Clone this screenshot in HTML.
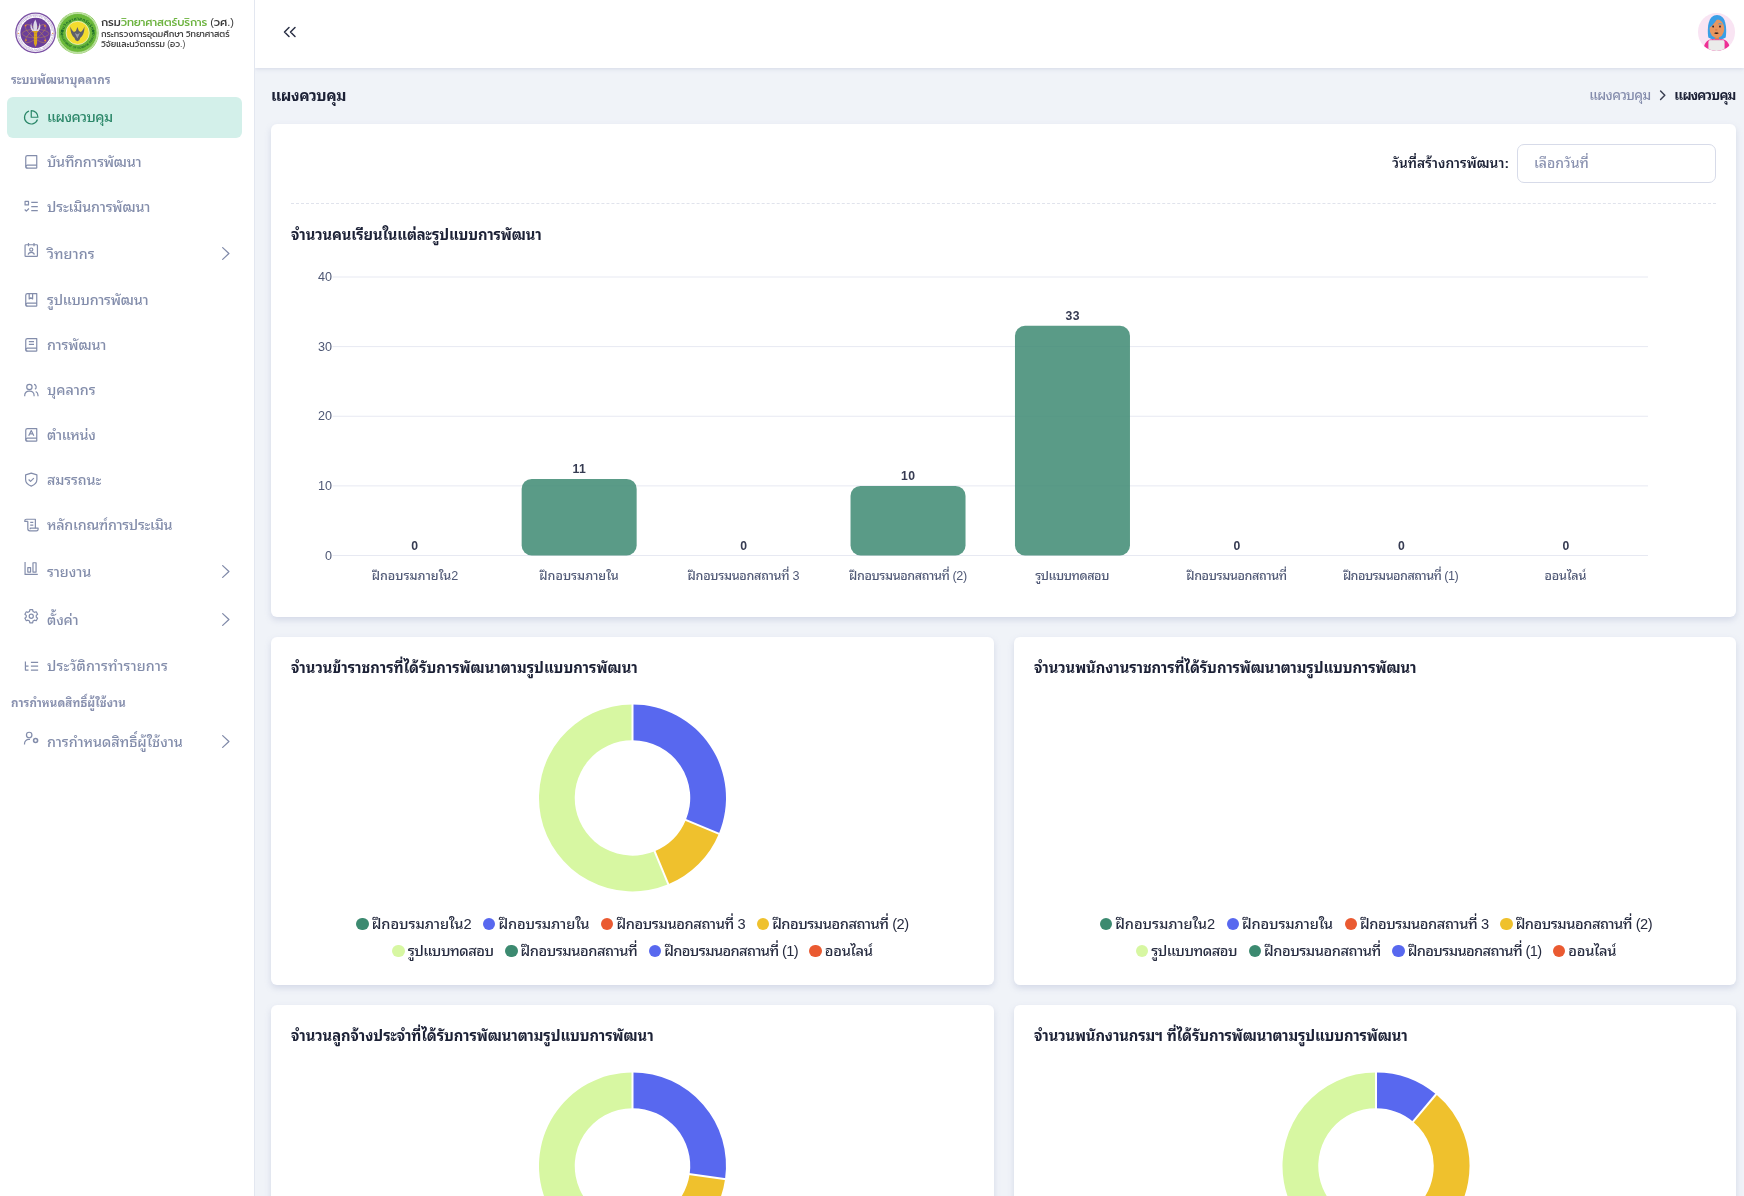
<!DOCTYPE html>
<html lang="th"><head><meta charset="utf-8"><title>แผงควบคุม</title>
<style>
*{box-sizing:border-box;margin:0;padding:0}
html,body{width:1744px;height:1196px;overflow:hidden;background:#f0f3f8;font-family:"Liberation Sans","Noto Sans Thai Looped","Loma","Noto Sans Thai",sans-serif;color:#1f2437}
#side{position:absolute;left:0;top:0;width:255px;height:1196px;background:#fff;border-right:1px solid #e3e7f0;z-index:3}
#top{position:absolute;left:255px;top:0;width:1489px;height:68px;background:#fff;box-shadow:0 1px 4px rgba(160,170,200,.35)}
.logo{position:absolute;left:0;top:0;width:254px;height:66px}
.lt1{position:absolute;left:101px;top:15px;font-family:"Liberation Sans","Prompt","Kanit","Noto Sans Thai",sans-serif;font-size:11.1px;font-weight:500;line-height:14px;color:#3a3a3a;white-space:nowrap}
.lt1 b{font-weight:500;color:#6cb33f}
.lt2{position:absolute;left:101px;top:29px;font-family:"Liberation Sans","Prompt","Kanit","Noto Sans Thai",sans-serif;font-size:8.5px;font-weight:500;line-height:10px;color:#444;white-space:nowrap}
.sec{position:absolute;left:11px;font-size:11.500px;font-weight:700;color:#8a92b0;line-height:14px;white-space:nowrap}
.mi{position:absolute;left:7px;width:235px;height:41px;border-radius:6px;font-weight:500;color:#838dab;font-size:14.3px;line-height:41px;white-space:nowrap}
.mi.act{background:#d3f0ea;color:#2b8769}
.mi.act .mt{top:0}
.mi .ico{position:absolute;left:15.800px;top:12.700px;width:16.500px;height:16.500px}
.mi.up .ico{top:9.200px}
.mi .mt{position:absolute;left:40px;top:1px}
.mi .chev{position:absolute;left:214px;top:13px;width:10px;height:15px;color:#808aa9}
.tog{position:absolute;left:283px;top:25px;width:14px;height:14px;color:#2a2f45}
.ava{position:absolute;left:1697.600px;top:13px;width:37.800px;height:38.200px;border-radius:50%;background:#f9e4f3;overflow:hidden}
.ptitle{position:absolute;left:271px;top:85px;font-size:15.500px;font-weight:700;color:#1c2136;line-height:22px}
.crumb{position:absolute;top:84.500px;font-size:13.600px;line-height:22px;color:#848cac;white-space:nowrap}
.cchev{position:absolute;left:1659px;top:90.200px;width:7.400px;height:10.600px;color:#3a3f52}
.card{position:absolute;background:#fff;border-radius:6px;box-shadow:0 3px 6px rgba(140,152,190,.28)}
.ctitle{position:absolute;left:20px;top:20px;font-size:14.750px;font-weight:700;color:#1c2136;line-height:22px;white-space:nowrap}
.flabel{position:absolute;right:227px;top:29px;font-size:13.700px;font-weight:600;color:#1c2136;line-height:22px;white-space:nowrap}
.finput{position:absolute;left:1246px;top:20px;width:199px;height:39px;border:1px solid #d7dbe9;border-radius:7px;font-weight:500;font-size:14px;line-height:37px;padding-left:16px;color:#8a92b0}
.dash{position:absolute;left:20px;top:79px;width:1425px;height:0;border-top:1px dashed #e0e3ec}
.bsvg{position:absolute;left:0;top:0}
.yl{font-family:"Liberation Sans","Noto Sans Thai Looped","Loma","Noto Sans Thai",sans-serif;font-size:12.600px;fill:#4f5875}
.xl{font-family:"Liberation Sans","Noto Sans Thai Looped","Loma","Noto Sans Thai",sans-serif;font-size:12.600px;font-weight:500;fill:#505976}
.dl{font-family:"Liberation Sans","Noto Sans Thai Looped","Loma","Noto Sans Thai",sans-serif;font-size:12.200px;font-weight:700;fill:#363b52;letter-spacing:.5px}
.dsvg{position:absolute;left:0;top:66px}
.legend{position:absolute;left:0;right:0;top:273.800px;text-align:center;font-size:14.650px;font-weight:500;color:#272c40;line-height:27px}
.lrow{height:27px;white-space:nowrap}
.li{display:inline-block;margin:0 5.800px}
.li i{display:inline-block;width:12.400px;height:12.400px;border-radius:50%;margin-right:3px;vertical-align:-1.500px}
#app{position:absolute;left:0;top:0;width:1744px;height:1196px;overflow:hidden;will-change:transform}
</style></head><body><div id="app">
<div id="side">
 <div class="logo">
  <svg width="100" height="66" viewBox="0 0 100 66" style="position:absolute;left:0;top:0">
   <defs>
    <path id="pa" d="M19.300 32.850a16.250 16.250 0 0 1 32.500 0"/>
    <path id="pb" d="M18.200 32.850a17.350 17.350 0 0 0 34.700 0"/>
    <path id="ga" d="M63.300 34.500a14.400 14.400 0 0 1 28.800 0"/>
    <path id="gb" d="M60.500 31.500a17.200 17.200 0 0 0 34.400 0"/>
   </defs>
   <circle cx="35.550" cy="32.850" r="19.700" fill="#fff" stroke="#7c52a5" stroke-width="1.300"/>
   <circle cx="35.550" cy="32.850" r="18.100" fill="none" stroke="#a78fc6" stroke-width=".5"/>
   <text font-family="'Liberation Sans','Noto Sans Thai',sans-serif" font-size="2.100" fill="#8a6bb0" letter-spacing=".05"><textPath href="#pa" startOffset="50%" text-anchor="middle">กระทรวงการอุดมศึกษา วิทยาศาสตร์ วิจัยและนวัตกรรม</textPath></text>
   <text font-family="'Liberation Sans',sans-serif" font-size="1.900" fill="#8a6bb0"><textPath href="#pb" startOffset="50%" text-anchor="middle">MINISTRY OF HIGHER EDUCATION, SCIENCE, RESEARCH AND INNOVATION</textPath></text>
   <circle cx="18.300" cy="33.300" r=".650" fill="#f0922e"/><circle cx="52.700" cy="33.300" r=".650" fill="#f0922e"/>
   <circle cx="35.550" cy="32.850" r="15.150" fill="#6b3e99"/>
   <g fill="none" stroke="#cfa040" stroke-width=".45" opacity=".85">
    <ellipse cx="35.550" cy="33.600" rx="13.300" ry="4.300"/>
    <ellipse cx="35.550" cy="33.600" rx="13.300" ry="4.300" transform="rotate(40 35.550 33.600)"/>
    <ellipse cx="35.550" cy="33.600" rx="13.300" ry="4.300" transform="rotate(-40 35.550 33.600)"/>
   </g>
   <g fill="#f08c28"><circle cx="25.600" cy="25.600" r=".900"/><circle cx="44.900" cy="25.900" r=".900"/><circle cx="26" cy="40.100" r=".900"/><circle cx="45.100" cy="40.500" r=".900"/></g>
   <path d="M35.300 19.500c2 3.300 2.400 7.800 1.300 11.500h-2.700c-1.200-3.700-.8-8.200 1.400-11.500zM31.300 22.800c-1.600 3.200-1 6.500 1.300 8.400l1.600-.5c-2-2.200-2.900-4.900-2.900-7.900zM39.500 22.800c1.600 3.200 1 6.500-1.300 8.400l-1.600-.5c2-2.200 2.900-4.900 2.900-7.900z" fill="#ddd8e6"/>
   <path d="M32.700 30.900h5.400v1.300h-1v11.200l-1.600 3.600-1.600-3.600V32.200h-1.200z" fill="#d9a31f"/>
   <path d="M34.500 33.500h2M34.500 36.500h2M34.500 39.500h2" stroke="#b98512" stroke-width=".4"/>
   <circle cx="77.700" cy="32.900" r="20.900" fill="#79c142"/>
   <circle cx="77.700" cy="32.900" r="20.100" fill="none" stroke="#fff" stroke-width=".6"/>
   <circle cx="77.700" cy="32.900" r="19.100" fill="none" stroke="#fff" stroke-width=".55"/>
   <circle cx="77.700" cy="32.900" r="15.300" fill="none" stroke="#6bb93a" stroke-width="7"/>
   <text font-family="'Liberation Sans','Noto Sans Thai',sans-serif" font-size="4.300" font-weight="700" fill="#1d6a2b" letter-spacing=".25"><textPath href="#ga" startOffset="50%" text-anchor="middle">กรมวิทยาศาสตร์บริการ</textPath></text>
   <text font-family="'Liberation Sans',sans-serif" font-size="2.900" font-weight="700" fill="#1d6a2b" letter-spacing=".05"><textPath href="#gb" startOffset="50%" text-anchor="middle">DEPARTMENT OF SCIENCE SERVICE</textPath></text>
   <circle cx="62.100" cy="30.800" r="1.300" fill="#1d6a2b"/><circle cx="93.200" cy="30.800" r="1.300" fill="#1d6a2b"/>
   <circle cx="77.700" cy="32.900" r="11.600" fill="#f3dc2e" stroke="#f4f8e8" stroke-width=".7"/>
   <path d="M70.300 26.500c0 3.200.5 5.600 1.300 7.400.7 1.600 1.700 2.900 2.800 3.900l1.200 2.400 1.800 1 1.800-1 1.200-2.400c1.100-1 2.100-2.300 2.800-3.900.8-1.800 1.300-4.200 1.300-7.400-.9 2.500-2 4.300-3.700 5.400l-1.900-.9-1.500-3.900-1.500 3.900-1.900.9c-1.700-1.100-2.800-2.900-3.700-5.400z" fill="#5e6068"/>
   <path d="M74.800 33l2.600 5.500 2.600-5.500-2.600 1.200z" fill="#9a9ca3"/>
  </svg>
  <div class="lt1" style="letter-spacing:-0.124px">กรม<b>วิทยาศาสตร์บริการ</b> (วศ.)</div>
  <div class="lt2"><span style="letter-spacing:-0.049px">กระทรวงการอุดมศึกษา วิทยาศาสตร์</span><br><span style="letter-spacing:-0.029px">วิจัยและนวัตกรรม (อว.)</span></div>
 </div>
 <div class="sec" style="top:73px;letter-spacing:0.06px">ระบบพัฒนาบุคลากร</div>
 <div class="mi act" style="top:96.5px"><svg class="ico" viewBox="0 0 24 24" fill="none" stroke="currentColor" stroke-width="1.750" stroke-linecap="butt" stroke-linejoin="round"><path d="M8.800 2.900A9.700 9.700 0 1 0 21.100 15.200"/><path d="M12 2.300v9.700h9.700A9.700 9.700 0 0 0 12 2.300z"/></svg><span class="mt" style="letter-spacing:-0.516px">แผงควบคุม</span></div>
<div class="mi" style="top:140.5px"><svg class="ico" viewBox="0 0 24 24" fill="none" stroke="currentColor" stroke-width="1.750" stroke-linecap="butt" stroke-linejoin="round"><path d="M20 17.600V3.800H6.500A2.500 2.500 0 0 0 4 6.300v13.400A2.400 2.400 0 0 0 6.400 22.100H20"/><path d="M20 17.600H6.400a2.250 2.250 0 0 0 0 4.500M20 17.600v4.500"/></svg><span class="mt" style="letter-spacing:-0.253px">บันทึกการพัฒนา</span></div>
<div class="mi" style="top:185.5px"><svg class="ico" viewBox="0 0 24 24" fill="none" stroke="currentColor" stroke-width="1.750" stroke-linecap="butt" stroke-linejoin="round"><rect x="3" y="5" width="5" height="5"/><path d="M2.500 16.800l2.300 2.300 3.900-3.900"/><path d="M12 6.500h9.500M12 12.500h9.500M12 18.500h9.500"/></svg><span class="mt" style="letter-spacing:-0.155px">ประเมินการพัฒนา</span></div>
<div class="mi up" style="top:232.5px"><svg class="ico" viewBox="0 0 24 24" fill="none" stroke="currentColor" stroke-width="1.750" stroke-linecap="butt" stroke-linejoin="round"><rect x="3" y="4" width="18" height="17" rx="1"/><path d="M8 1.500v4.500M16 1.500v4.500"/><circle cx="12" cy="11" r="2.300"/><path d="M7.500 18.500c.5-2.500 2.300-3.500 4.500-3.500s4 1 4.500 3.500"/></svg><span class="mt" style="letter-spacing:0.086px">วิทยากร</span><svg class="chev" viewBox="0 0 12 18" fill="none" stroke="currentColor" stroke-width="1.500" stroke-linecap="round" stroke-linejoin="round"><path d="M2 2l7.500 7L2 16"/></svg></div>
<div class="mi" style="top:278.5px"><svg class="ico" viewBox="0 0 24 24" fill="none" stroke="currentColor" stroke-width="1.750" stroke-linecap="butt" stroke-linejoin="round"><path d="M20 17.600V3.800H6.500A2.500 2.500 0 0 0 4 6.300v13.400A2.400 2.400 0 0 0 6.400 22.100H20"/><path d="M20 17.600H6.400a2.250 2.250 0 0 0 0 4.500M20 17.600v4.500"/><path d="M9 3.800v7.700l2.500-1.800 2.500 1.800V3.800"/></svg><span class="mt" style="letter-spacing:-0.214px">รูปแบบการพัฒนา</span></div>
<div class="mi" style="top:323.5px"><svg class="ico" viewBox="0 0 24 24" fill="none" stroke="currentColor" stroke-width="1.750" stroke-linecap="butt" stroke-linejoin="round"><path d="M20 17.600V3.800H6.500A2.500 2.500 0 0 0 4 6.300v13.400A2.400 2.400 0 0 0 6.400 22.100H20"/><path d="M20 17.600H6.400a2.250 2.250 0 0 0 0 4.500M20 17.600v4.500"/><path d="M8.500 8.200h7.500M8.500 12.200h7.500"/></svg><span class="mt" style="letter-spacing:-0.138px">การพัฒนา</span></div>
<div class="mi" style="top:368.5px"><svg class="ico" viewBox="0 0 24 24" fill="none" stroke="currentColor" stroke-width="1.750" stroke-linecap="butt" stroke-linejoin="round"><circle cx="9.300" cy="8.700" r="3.900"/><path d="M2.500 22v-1.200A6.200 6.200 0 0 1 8.700 14.600h1.200A6.200 6.200 0 0 1 16.100 20.800V22"/><path d="M16 4.900a3.900 3.900 0 0 1 1.300 7.200M21.800 22v-1.200a6.200 6.200 0 0 0-3.300-5.500"/></svg><span class="mt" style="letter-spacing:0.013px">บุคลากร</span></div>
<div class="mi" style="top:413.5px"><svg class="ico" viewBox="0 0 24 24" fill="none" stroke="currentColor" stroke-width="1.750" stroke-linecap="butt" stroke-linejoin="round"><path d="M20 17.600V3.800H6.500A2.500 2.500 0 0 0 4 6.300v13.400A2.400 2.400 0 0 0 6.400 22.100H20"/><path d="M20 17.600H6.400a2.250 2.250 0 0 0 0 4.500M20 17.600v4.500"/><path d="M8.300 14.200L12 6.700l3.700 7.500M9.700 11.500h4.600"/></svg><span class="mt" style="letter-spacing:-0.289px">ตำแหน่ง</span></div>
<div class="mi" style="top:458.5px"><svg class="ico" viewBox="0 0 24 24" fill="none" stroke="currentColor" stroke-width="1.750" stroke-linecap="butt" stroke-linejoin="round"><path d="M12 3l8.200 2.700v6.800c0 4.700-3.400 7.800-8.200 9.500-4.800-1.700-8.200-4.800-8.200-9.500V5.700z"/><path d="M8.200 12.300l2.800 2.800 4.800-4.800"/></svg><span class="mt" style="letter-spacing:-0.114px">สมรรถนะ</span></div>
<div class="mi" style="top:503.5px"><svg class="ico" viewBox="0 0 24 24" fill="none" stroke="currentColor" stroke-width="1.750" stroke-linecap="butt" stroke-linejoin="round"><g transform="translate(0 1.200)"><path d="M7 6.500V17.500A3 3 0 0 0 10 20.500H19.500A2.500 2.500 0 0 0 22 18V16.500H10.500V18"/><path d="M18 16.500V3.500H5A2.500 2.500 0 0 0 2.500 6v.5H7"/><path d="M10.500 8h4.500M10.500 12h4.500"/></g></svg><span class="mt" style="letter-spacing:-0.252px">หลักเกณฑ์การประเมิน</span></div>
<div class="mi up" style="top:550.5px"><svg class="ico" viewBox="0 0 24 24" fill="none" stroke="currentColor" stroke-width="1.750" stroke-linecap="butt" stroke-linejoin="round"><path d="M3 3v18h18.500"/><rect x="7" y="11" width="4" height="6.500"/><rect x="14.500" y="4" width="4.500" height="13.500"/></svg><span class="mt" style="letter-spacing:-0.052px">รายงาน</span><svg class="chev" viewBox="0 0 12 18" fill="none" stroke="currentColor" stroke-width="1.500" stroke-linecap="round" stroke-linejoin="round"><path d="M2 2l7.500 7L2 16"/></svg></div>
<div class="mi up" style="top:598.5px"><svg class="ico" viewBox="0 0 24 24" fill="none" stroke="currentColor" stroke-width="1.750" stroke-linecap="butt" stroke-linejoin="round"><circle cx="12" cy="12" r="3"/><path d="M9.98 2.51L14.02 2.51L14.53 5.05L16.76 6.33L19.21 5.51L21.23 9.00L19.29 10.72L19.29 13.28L21.23 15.00L19.21 18.49L16.76 17.67L14.53 18.95L14.02 21.49L9.98 21.49L9.47 18.95L7.24 17.67L4.79 18.49L2.77 15.00L4.71 13.28L4.71 10.72L2.77 9.00L4.79 5.51L7.24 6.33L9.47 5.05Z"/></svg><span class="mt" style="letter-spacing:-0.137px">ตั้งค่า</span><svg class="chev" viewBox="0 0 12 18" fill="none" stroke="currentColor" stroke-width="1.500" stroke-linecap="round" stroke-linejoin="round"><path d="M2 2l7.500 7L2 16"/></svg></div>
<div class="mi" style="top:644.5px"><svg class="ico" viewBox="0 0 24 24" fill="none" stroke="currentColor" stroke-width="1.750" stroke-linecap="butt" stroke-linejoin="round"><path d="M3.500 6.500v12.500h4.500M3.500 13.300h4.500"/><path d="M11.500 7.800h10.500M11.500 13.400h10.500M11.500 19h10.500"/></svg><span class="mt" style="letter-spacing:0.127px">ประวัติการทำรายการ</span></div>
<div class="mi up" style="top:720.5px"><svg class="ico" viewBox="0 0 24 24" fill="none" stroke="currentColor" stroke-width="1.750" stroke-linecap="butt" stroke-linejoin="round"><circle cx="9" cy="7.300" r="4"/><path d="M2.200 21v-1A6.300 6.300 0 0 1 8.500 13.700h1.700"/><circle cx="18.300" cy="15.300" r="2.900" stroke-width="2.300"/></svg><span class="mt" style="letter-spacing:-0.014px">การกำหนดสิทธิ์ผู้ใช้งาน</span><svg class="chev" viewBox="0 0 12 18" fill="none" stroke="currentColor" stroke-width="1.500" stroke-linecap="round" stroke-linejoin="round"><path d="M2 2l7.500 7L2 16"/></svg></div>
 <div class="sec" style="top:696px;letter-spacing:0.101px">การกำหนดสิทธิ์ผู้ใช้งาน</div>
</div>
<div id="top"></div>
<svg class="tog" viewBox="0 0 14 14" fill="none" stroke="currentColor" stroke-width="1.500" stroke-linecap="round" stroke-linejoin="round"><path d="M6 2.500L1.500 7 6 11.500M12 2.500L7.500 7l4.500 4.500"/></svg>
<div class="ava"><svg width="38" height="38" viewBox="0 0 38 38">
 <path d="M10.300 24.500C8.800 14 10.500 2 19 2c8.500 0 10.200 12 8.700 22.500l-3 1.500H13.300z" fill="#3a9fe6"/>
 <path d="M16.800 23h4.200v4.500h-4.200z" fill="#d98350"/>
 <ellipse cx="18.900" cy="15.700" rx="7.300" ry="9.400" fill="#e9965f"/>
 <path d="M11.600 14.500c-.6-6 2-10.500 7.400-11.300 3.500-.4 6.500 1.500 7.800 5-2.500-2.400-6.300-2.700-8.300-1.300-2 3-4.500 6-6.900 7.600z" fill="#3a9fe6"/>
 <path d="M20.300 10.700c1.300-.7 3-.6 4 .2l-.2.700c-1.200-.5-2.500-.5-3.700-.1z" fill="#3a9fe6"/>
 <ellipse cx="15.100" cy="13.600" rx=".9" ry="1.100" fill="#2a1c2c"/><ellipse cx="22" cy="13.600" rx=".9" ry="1.100" fill="#2a1c2c"/>
 <ellipse cx="18.300" cy="16.900" rx="1.300" ry=".8" fill="#dc7f4f"/>
 <path d="M16.300 20c1.300-.6 3-.6 4.300 0-.3 1.200-4 1.200-4.300 0z" fill="#1f1416"/>
 <path d="M5.500 38c0-7 3-11.300 8.500-11.700h9.800C29.300 26.700 32 31 32 38z" fill="#ee2f95"/>
 <path d="M14 26c2 1.400 7.500 1.400 9.500 0v1.800h-9.500z" fill="#e0287f"/>
 <rect x="10.700" y="27.200" width="15.600" height="12" rx="1.500" fill="#ebebea" stroke="#dbf3e8" stroke-width=".5"/>
</svg></div>
<div class="ptitle" style="letter-spacing:-0.439px">แผงควบคุม</div>
<div class="crumb" style="left:1589.300px;font-weight:500;letter-spacing:-0.638px">แผงควบคุม</div><svg class="cchev" viewBox="0 0 7 10" fill="none" stroke="currentColor" stroke-width="1.400" stroke-linecap="round" stroke-linejoin="round"><path d="M1.500 1l4 4-4 4"/></svg><div class="crumb" style="left:1674.300px;color:#1c2136;font-weight:700;font-size:13.400px;letter-spacing:-0.816px">แผงควบคุม</div>

<div class="card" style="left:271px;top:124px;width:1465px;height:493px">
 <div class="flabel" style="letter-spacing:0.041px">วันที่สร้างการพัฒนา:</div>
 <div class="finput">เลือกวันที่</div>
 <div class="dash"></div>
 <div class="ctitle" style="top:100px;letter-spacing:-0.13px">จำนวนคนเรียนในแต่ละรูปแบบการพัฒนา</div>
 <svg class="bsvg" width="1465" height="492" viewBox="0 0 1465 492">
<line x1="61.5" x2="1377" y1="153.00" y2="153.00" stroke="#e7e9f2" stroke-width="1"/>
<text x="61.0" y="157.00" text-anchor="end" class="yl">40</text>
<line x1="61.5" x2="1377" y1="222.62" y2="222.62" stroke="#e7e9f2" stroke-width="1"/>
<text x="61.0" y="226.62" text-anchor="end" class="yl">30</text>
<line x1="61.5" x2="1377" y1="292.25" y2="292.25" stroke="#e7e9f2" stroke-width="1"/>
<text x="61.0" y="296.25" text-anchor="end" class="yl">20</text>
<line x1="61.5" x2="1377" y1="361.88" y2="361.88" stroke="#e7e9f2" stroke-width="1"/>
<text x="61.0" y="365.88" text-anchor="end" class="yl">10</text>
<line x1="61.5" x2="1377" y1="431.50" y2="431.50" stroke="#e7e9f2" stroke-width="1"/>
<text x="61.0" y="435.50" text-anchor="end" class="yl">0</text>
<text x="143.97" y="425.70" text-anchor="middle" class="dl">0</text>
<text x="143.90" y="455.80" text-anchor="middle" class="xl" style="letter-spacing:-0.007px">ฝึกอบรมภายใน2</text>
<rect x="250.66" y="354.91" width="115" height="76.59" rx="10" ry="10" fill="#3d8a72" fill-opacity=".85"/>
<text x="308.41" y="349.11" text-anchor="middle" class="dl">11</text>
<text x="307.99" y="455.80" text-anchor="middle" class="xl" style="letter-spacing:-0.024px">ฝึกอบรมภายใน</text>
<text x="472.84" y="425.70" text-anchor="middle" class="dl">0</text>
<text x="472.34" y="455.80" text-anchor="middle" class="xl" style="letter-spacing:-0.312px">ฝึกอบรมนอกสถานที่ 3</text>
<rect x="579.53" y="361.88" width="115" height="69.62" rx="10" ry="10" fill="#3d8a72" fill-opacity=".85"/>
<text x="637.28" y="356.07" text-anchor="middle" class="dl">10</text>
<text x="636.90" y="455.80" text-anchor="middle" class="xl" style="letter-spacing:-0.404px">ฝึกอบรมนอกสถานที่ (2)</text>
<rect x="743.97" y="201.74" width="115" height="229.76" rx="10" ry="10" fill="#3d8a72" fill-opacity=".85"/>
<text x="801.72" y="195.94" text-anchor="middle" class="dl">33</text>
<text x="801.08" y="455.80" text-anchor="middle" class="xl" style="letter-spacing:-0.441px">รูปแบบทดสอบ</text>
<text x="966.16" y="425.70" text-anchor="middle" class="dl">0</text>
<text x="965.50" y="455.80" text-anchor="middle" class="xl" style="letter-spacing:-0.392px">ฝึกอบรมนอกสถานที่</text>
<text x="1130.59" y="425.70" text-anchor="middle" class="dl">0</text>
<text x="1129.53" y="455.80" text-anchor="middle" class="xl" style="letter-spacing:-0.532px">ฝึกอบรมนอกสถานที่ (1)</text>
<text x="1295.03" y="425.70" text-anchor="middle" class="dl">0</text>
<text x="1294.33" y="455.80" text-anchor="middle" class="xl" style="letter-spacing:-0.142px">ออนไลน์</text>
</svg>
</div>
<div class="card" style="left:271px;top:637px;width:723px;height:348px">
<div class="ctitle" style="letter-spacing:0.007px">จำนวนข้าราชการที่ได้รับการพัฒนาตามรูปแบบการพัฒนา</div>
<svg class="dsvg" width="723" height="200" viewBox="0 0 723 200"><path d="M361.50 1.40A93.5 93.5 0 0 1 447.88 130.68L414.85 117.00A57.75 57.75 0 0 0 361.50 37.15Z" fill="#5868ef"/>
<path d="M447.88 130.68A93.5 93.5 0 0 1 397.28 181.28L383.60 148.25A57.75 57.75 0 0 0 414.85 117.00Z" fill="#efc12d"/>
<path d="M397.28 181.28A93.5 93.5 0 1 1 361.50 1.40L361.50 37.15A57.75 57.75 0 1 0 383.60 148.25Z" fill="#d7f7a2"/>
<line x1="361.50" y1="38.15" x2="361.50" y2="0.40" stroke="#fff" stroke-width="2"/>
<line x1="413.93" y1="116.62" x2="448.81" y2="131.06" stroke="#fff" stroke-width="2"/>
<line x1="383.22" y1="147.33" x2="397.66" y2="182.21" stroke="#fff" stroke-width="2"/></svg>
<div class="legend" style="left:0.0px"><div class="lrow"><span class="li"><i style="background:#3c8a70"></i><span style="letter-spacing:-0.078px">ฝึกอบรมภายใน2</span></span><span class="li"><i style="background:#5868ef"></i><span style="letter-spacing:-0.136px">ฝึกอบรมภายใน</span></span><span class="li"><i style="background:#ea5a31"></i><span style="letter-spacing:-0.42px">ฝึกอบรมนอกสถานที่ 3</span></span><span class="li"><i style="background:#efc12d"></i><span style="letter-spacing:-0.482px">ฝึกอบรมนอกสถานที่ (2)</span></span></div><div class="lrow"><span class="li"><i style="background:#d7f7a2"></i><span style="letter-spacing:-0.48px">รูปแบบทดสอบ</span></span><span class="li"><i style="background:#3c8a70"></i><span style="letter-spacing:-0.465px">ฝึกอบรมนอกสถานที่</span></span><span class="li"><i style="background:#5868ef"></i><span style="letter-spacing:-0.643px">ฝึกอบรมนอกสถานที่ (1)</span></span><span class="li"><i style="background:#ea5a31"></i><span style="letter-spacing:-0.301px">ออนไลน์</span></span></div></div>
</div>
<div class="card" style="left:1014px;top:637px;width:722px;height:348px">
<div class="ctitle" style="letter-spacing:-0.078px">จำนวนพนักงานราชการที่ได้รับการพัฒนาตามรูปแบบการพัฒนา</div>

<div class="legend" style="left:2.0px"><div class="lrow"><span class="li"><i style="background:#3c8a70"></i><span style="letter-spacing:-0.078px">ฝึกอบรมภายใน2</span></span><span class="li"><i style="background:#5868ef"></i><span style="letter-spacing:-0.136px">ฝึกอบรมภายใน</span></span><span class="li"><i style="background:#ea5a31"></i><span style="letter-spacing:-0.42px">ฝึกอบรมนอกสถานที่ 3</span></span><span class="li"><i style="background:#efc12d"></i><span style="letter-spacing:-0.482px">ฝึกอบรมนอกสถานที่ (2)</span></span></div><div class="lrow"><span class="li"><i style="background:#d7f7a2"></i><span style="letter-spacing:-0.48px">รูปแบบทดสอบ</span></span><span class="li"><i style="background:#3c8a70"></i><span style="letter-spacing:-0.465px">ฝึกอบรมนอกสถานที่</span></span><span class="li"><i style="background:#5868ef"></i><span style="letter-spacing:-0.643px">ฝึกอบรมนอกสถานที่ (1)</span></span><span class="li"><i style="background:#ea5a31"></i><span style="letter-spacing:-0.301px">ออนไลน์</span></span></div></div>
</div>
<div class="card" style="left:271px;top:1005px;width:723px;height:347px">
<div class="ctitle" style="letter-spacing:-0.065px">จำนวนลูกจ้างประจำที่ได้รับการพัฒนาตามรูปแบบการพัฒนา</div>
<svg class="dsvg" width="723" height="200" viewBox="0 0 723 200"><path d="M361.50 1.40A93.5 93.5 0 0 1 454.05 108.21L418.66 103.12A57.75 57.75 0 0 0 361.50 37.15Z" fill="#5868ef"/>
<path d="M454.05 108.21A93.5 93.5 0 0 1 432.16 156.13L405.14 132.72A57.75 57.75 0 0 0 418.66 103.12Z" fill="#efc12d"/>
<path d="M432.16 156.13A93.5 93.5 0 1 1 361.50 1.40L361.50 37.15A57.75 57.75 0 1 0 405.14 132.72Z" fill="#d7f7a2"/>
<line x1="361.50" y1="38.15" x2="361.50" y2="0.40" stroke="#fff" stroke-width="2"/>
<line x1="417.67" y1="102.98" x2="455.04" y2="108.35" stroke="#fff" stroke-width="2"/>
<line x1="404.39" y1="132.06" x2="432.92" y2="156.78" stroke="#fff" stroke-width="2"/></svg>
<div class="legend" style="left:0.0px"><div class="lrow"><span class="li"><i style="background:#3c8a70"></i><span style="letter-spacing:-0.078px">ฝึกอบรมภายใน2</span></span><span class="li"><i style="background:#5868ef"></i><span style="letter-spacing:-0.136px">ฝึกอบรมภายใน</span></span><span class="li"><i style="background:#ea5a31"></i><span style="letter-spacing:-0.42px">ฝึกอบรมนอกสถานที่ 3</span></span><span class="li"><i style="background:#efc12d"></i><span style="letter-spacing:-0.482px">ฝึกอบรมนอกสถานที่ (2)</span></span></div><div class="lrow"><span class="li"><i style="background:#d7f7a2"></i><span style="letter-spacing:-0.48px">รูปแบบทดสอบ</span></span><span class="li"><i style="background:#3c8a70"></i><span style="letter-spacing:-0.465px">ฝึกอบรมนอกสถานที่</span></span><span class="li"><i style="background:#5868ef"></i><span style="letter-spacing:-0.643px">ฝึกอบรมนอกสถานที่ (1)</span></span><span class="li"><i style="background:#ea5a31"></i><span style="letter-spacing:-0.301px">ออนไลน์</span></span></div></div>
</div>
<div class="card" style="left:1014px;top:1005px;width:722px;height:347px">
<div class="ctitle" style="letter-spacing:-0.121px">จำนวนพนักงานกรมฯ ที่ได้รับการพัฒนาตามรูปแบบการพัฒนา</div>
<svg class="dsvg" width="722" height="200" viewBox="0 0 722 200"><path d="M362.00 1.40A93.5 93.5 0 0 1 422.10 23.27L399.12 50.66A57.75 57.75 0 0 0 362.00 37.15Z" fill="#5868ef"/>
<path d="M422.10 23.27A93.5 93.5 0 0 1 393.98 182.76L381.75 149.17A57.75 57.75 0 0 0 399.12 50.66Z" fill="#efc12d"/>
<path d="M393.98 182.76A93.5 93.5 0 1 1 362.00 1.40L362.00 37.15A57.75 57.75 0 1 0 381.75 149.17Z" fill="#d7f7a2"/>
<line x1="362.00" y1="38.15" x2="362.00" y2="0.40" stroke="#fff" stroke-width="2"/>
<line x1="398.48" y1="51.43" x2="422.74" y2="22.51" stroke="#fff" stroke-width="2"/>
<line x1="381.41" y1="148.23" x2="394.32" y2="183.70" stroke="#fff" stroke-width="2"/></svg>
<div class="legend" style="left:2.0px"><div class="lrow"><span class="li"><i style="background:#3c8a70"></i><span style="letter-spacing:-0.078px">ฝึกอบรมภายใน2</span></span><span class="li"><i style="background:#5868ef"></i><span style="letter-spacing:-0.136px">ฝึกอบรมภายใน</span></span><span class="li"><i style="background:#ea5a31"></i><span style="letter-spacing:-0.42px">ฝึกอบรมนอกสถานที่ 3</span></span><span class="li"><i style="background:#efc12d"></i><span style="letter-spacing:-0.482px">ฝึกอบรมนอกสถานที่ (2)</span></span></div><div class="lrow"><span class="li"><i style="background:#d7f7a2"></i><span style="letter-spacing:-0.48px">รูปแบบทดสอบ</span></span><span class="li"><i style="background:#3c8a70"></i><span style="letter-spacing:-0.465px">ฝึกอบรมนอกสถานที่</span></span><span class="li"><i style="background:#5868ef"></i><span style="letter-spacing:-0.643px">ฝึกอบรมนอกสถานที่ (1)</span></span><span class="li"><i style="background:#ea5a31"></i><span style="letter-spacing:-0.301px">ออนไลน์</span></span></div></div>
</div>
</div></body></html>
